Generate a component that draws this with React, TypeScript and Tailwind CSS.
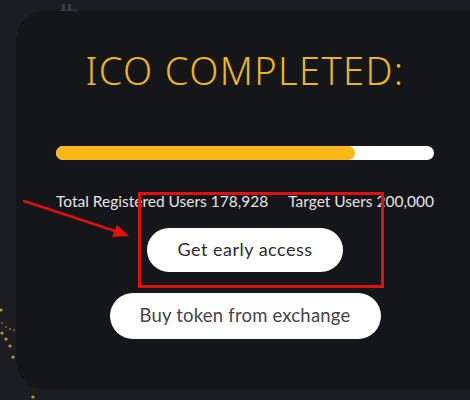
import React from 'react';

function Annotation() {
  return (
    <>
      <div className="pointer-events-none absolute left-[138px] top-[192px] h-[96px] w-[246px] border-[3px] border-[#e01010]" />
      <svg className="pointer-events-none absolute left-0 top-0" width="470" height="400">
        <line x1="24" y1="201" x2="118" y2="232" stroke="#e01010" strokeWidth="2.5" strokeLinecap="round" />
        <polygon points="129,236 112,237 117,225" fill="#e01010" />
      </svg>
    </>
  );
}

function GoldDots() {
  const dots = [
    [2, 323], [6, 327], [10, 329], [14, 330], [2, 333], [6, 339], [10, 346], [13, 357], [1, 310], [33, 397],
  ];
  return (
    <svg className="pointer-events-none absolute left-0 top-0" width="470" height="400">
      {dots.map(([x, y], i) => (
        <circle key={i} cx={x} cy={y} r={i < 4 ? 1 : 1.6} fill="#d9a516" opacity={i < 4 ? 0.6 : 0.9} />
      ))}
      <rect x="62" y="4" width="3" height="6" fill="#3a3b42" />
      <rect x="68" y="4" width="3" height="6" fill="#3a3b42" />
      <rect x="60" y="10" width="18" height="1" fill="#3a3b42" />
    </svg>
  );
}

export default function App() {
  return (
    <div className="relative h-[400px] w-[470px] overflow-hidden bg-[#1c1d23]">
      <GoldDots />
      <div className="ml-[16px] mt-[10px] flex h-[380px] w-[480px] flex-col items-center rounded-[32px] bg-[#15161a] pr-[22px]">
        <h1
          className="mt-[41px] text-[38px] font-light leading-none tracking-[1.4px] text-[#ecb51d]"
          style={{ fontFamily: '"Noto Sans", Lato, sans-serif' }}
        >
          ICO COMPLETED:
        </h1>
        <div className="mt-[57px] h-[14px] w-[378px] overflow-hidden rounded-full bg-white">
          <div className="h-full w-[79%] rounded-full bg-[#fbb915]" />
        </div>
        <div
          className="mt-[34px] flex w-[378px] justify-between text-[15.5px] leading-none text-[#e4e4e4]"
          style={{ fontFamily: 'Lato, "Noto Sans", sans-serif' }}
        >
          <span>Total Registered Users 178,928</span>
          <span>Target Users 200,000</span>
        </div>
        <button
          className="mt-[18px] flex h-[44px] w-[196px] items-center justify-center rounded-full bg-white text-[18px] tracking-[0.5px] text-[#2c2c2c]"
          style={{ fontFamily: 'Lato, "Noto Sans", sans-serif' }}
        >
          Get early access
        </button>
        <button
          className="mt-[21px] flex h-[46px] w-[271px] items-center justify-center rounded-full bg-white text-[18.5px] tracking-[0.2px] text-[#444]"
          style={{ fontFamily: 'Lato, "Noto Sans", sans-serif' }}
        >
          Buy token from exchange
        </button>
      </div>
      <Annotation />
    </div>
  );
}
